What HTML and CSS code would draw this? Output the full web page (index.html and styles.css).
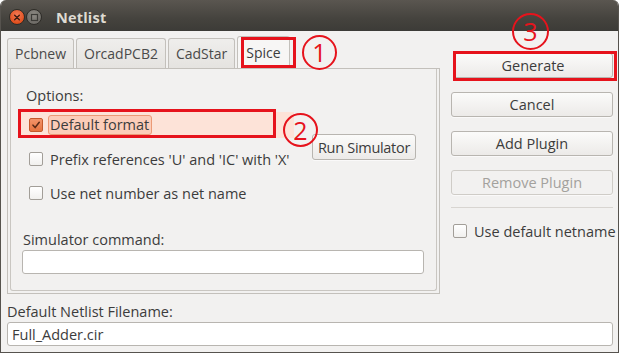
FILE: index.html
```html
<!DOCTYPE html>
<html>
<head>
<meta charset="utf-8">
<link rel="stylesheet" href="styles.css">
</head>
<body>
<div class="window">
  <div class="titlebar">
    <span class="wbtn close"><svg width="15" height="15" viewBox="0 0 15 15"><path d="M5 5 L10 10 M10 5 L5 10" stroke="#3a1a10" stroke-width="1.4" stroke-linecap="round"/></svg></span>
    <span class="wbtn max"><svg width="13" height="13" viewBox="0 0 13 13"><rect x="3.5" y="3.5" width="6" height="6" fill="none" stroke="#3c3b37" stroke-width="1.2"/></svg></span>
    <span class="title">Netlist</span>
  </div>
  <div class="content">
    <div class="top">
      <div class="notebook">
        <div class="tabs">
          <div class="tab">Pcbnew</div>
          <div class="tab">OrcadPCB2</div>
          <div class="tab">CadStar</div>
          <div class="tab active">Spice</div>
        </div>
        <div class="page">
          <div class="frame">
            <div class="label opt">Options:</div>
            <div class="options">
              <div class="checks">
                <div class="check hl"><span class="box checked"><svg width="14" height="14" viewBox="0 0 14 14"><path d="M3.5 7.2 L6 10 L10.8 3.8" fill="none" stroke="#5b2a17" stroke-width="1.8" stroke-linecap="round" stroke-linejoin="round"/></svg></span><span class="focus">Default format</span></div>
                <div class="check"><span class="box"></span><span class="txt">Prefix references 'U' and 'IC' with 'X'</span></div>
                <div class="check"><span class="box"></span><span class="txt">Use net number as net name</span></div>
              </div>
              <div class="btn sim">Run Simulator</div>
            </div>
            <div class="label cmd">Simulator command:</div>
            <div class="input cmdinput"></div>
          </div>
        </div>
      </div>
      <div class="side">
        <div class="btn">Generate</div>
        <div class="btn">Cancel</div>
        <div class="btn">Add Plugin</div>
        <div class="btn disabled">Remove Plugin</div>
        <div class="sep"></div>
        <div class="check side-check"><span class="box"></span><span class="txt">Use default netname</span></div>
      </div>
    </div>
    <div class="label fname">Default Netlist Filename:</div>
    <div class="input">Full_Adder.cir</div>
  </div>

  <div class="mark rect r1"></div>
  <div class="mark circ c1">1</div>
  <div class="mark rect r2"></div>
  <div class="mark circ c2">2</div>
  <div class="mark rect r3"></div>
  <div class="mark circ c3">3</div>
</div>
</body>
</html>
```
FILE: styles.css
```css
* { box-sizing: border-box; }
html, body { margin: 0; padding: 0; background: #ffffff; }
body {
  font-family: "Open Sans", "DejaVu Sans", sans-serif;
  font-size: 14.5px;
  color: #3c3c3c;
}
.window {
  position: relative;
  width: 619px;
  height: 353px;
  background: #f2f1f0;
  border: 1px solid #56534e;
  border-top: none;
  border-radius: 6px 6px 0 0;
  overflow: hidden;
}
.titlebar {
  height: 31px;
  background: linear-gradient(#5a5650, #45433e 60%, #3c3b37);
  display: flex;
  align-items: center;
  padding-left: 8px;
  padding-top: 3px;
}
.wbtn {
  width: 16px;
  height: 16px;
  border-radius: 50%;
  display: flex;
  align-items: center;
  justify-content: center;
}
.close {
  background: radial-gradient(circle at 50% 35%, #f47a55, #e0501f 70%, #b9400f);
  border: 1px solid #2e2c28;
}
.max {
  margin-left: 1px;
  background: radial-gradient(circle at 50% 35%, #8e8b85, #6b6964 80%);
  border: 1px solid #2e2c28;
}
.title {
  margin-left: 14px;
  font-weight: bold;
  font-size: 14.5px;
  color: #dfdbd2;
  letter-spacing: 0.2px;
}
.content {
  padding: 5px 5px 0 6px;
}
.top {
  display: flex;
  align-items: flex-start;
}
.notebook {
  width: 434px;
}
.tabs {
  display: flex;
  align-items: flex-end;
  gap: 2px;
  height: 32px;
  font-size: 14px;
}
.tab {
  height: 30px;
  padding: 0 7px;
  display: flex;
  align-items: center;
  border: 1px solid #c3c0bb;
  border-bottom: none;
  border-radius: 3px 3px 0 0;
  background: linear-gradient(#efeeec, #e5e3e0);
  color: #4a4a4a;
}
.tab.active {
  height: 32px;
  background: #f7f6f5;
  color: #3c3c3c;
  padding: 0 8px;
}
.page {
  height: 226px;
  border: 1px solid #c3c0bb;
  padding: 0 2px 2px 2px;
  background: #f2f1f0;
}
.frame {
  height: 100%;
  border: 1px solid #c9c6c1;
  border-top: none;
  border-radius: 0 0 3px 3px;
  padding: 0 12px 0 7px;
}
.label {
  line-height: 18px;
  white-space: nowrap;
}
.opt {
  padding-top: 18px;
  padding-left: 8px;
}
.options {
  display: flex;
  align-items: flex-start;
  margin-top: 7px;
}
.checks {
  width: 276px;
  display: flex;
  flex-direction: column;
  gap: 8px;
}
.check {
  height: 26px;
  display: flex;
  align-items: center;
  padding-left: 11px;
  white-space: nowrap;
}
.check.hl {
  background: #fde3d8;
}
.box {
  width: 14px;
  height: 14px;
  flex: none;
  border: 1px solid #a29e98;
  border-radius: 2px;
  background: linear-gradient(#ffffff, #f1f0ee);
  margin-right: 7px;
  display: flex;
  align-items: center;
  justify-content: center;
}
.box.checked {
  border-color: #c45a2c;
  background: linear-gradient(#f3946a, #e6733f);
}
.focus {
  border: 1px solid #eb9a76;
  border-radius: 3px;
  background: #fccdb9;
  padding: 0 2px 0 1px;
  margin-left: -2px;
  line-height: 18px;
}
.btn {
  height: 25px;
  border: 1px solid #b8b5b0;
  border-radius: 3px;
  background: linear-gradient(#fbfbfa, #eceae8);
  display: flex;
  align-items: center;
  justify-content: center;
  white-space: nowrap;
  box-shadow: 0 1px 0 rgba(255,255,255,0.6);
}
.btn.disabled {
  color: #a3a19d;
  background: #f2f1f0;
  border-color: #cfccc7;
}
.sim {
  margin-top: 22px;
  margin-left: 18px;
  width: 104px;
  height: 26px;
  letter-spacing: -0.3px;
}
.cmd {
  margin-top: 25px;
  padding-left: 5px;
}
.input {
  height: 24px;
  border: 1px solid #b8b5b0;
  border-radius: 3px;
  background: #ffffff;
  display: flex;
  align-items: center;
  padding-left: 4px;
  white-space: nowrap;
}
.cmdinput {
  margin-top: 1px;
  margin-left: 4px;
  width: 402px;
}
.side {
  width: 162px;
  margin-left: 11px;
  padding-top: 17px;
  display: flex;
  flex-direction: column;
  gap: 14px;
}
.side .btn:first-child {
  margin-left: 2px;
}
.sep {
  height: 1px;
  background: #d8d5d1;
  margin-top: -2px;
}
.side-check {
  padding-left: 2px;
  height: 20px;
  margin-top: -1px;
}
.fname {
  margin-top: 9px;
}
.content > .input {
  margin-top: 1px;
}
.mark {
  position: absolute;
  border: 3px solid #e6131c;
}
.r1 { left: 240px; top: 37px; width: 55px; height: 31px; }
.r2 { left: 17px; top: 109px; width: 258px; height: 29px; }
.r3 { left: 452px; top: 51px; width: 164px; height: 30px; }
.circ {
  border-width: 2px;
  border-radius: 50%;
  display: flex;
  align-items: center;
  justify-content: center;
  color: #e6131c;
  font-family: "Open Sans", "DejaVu Sans", sans-serif;
  font-size: 25px;
  line-height: 1;
}
.c1 { left: 301px; top: 35px; width: 35px; height: 35px; }
.c2 { left: 282px; top: 113px; width: 35px; height: 34px; }
.c3 { left: 511px; top: 13px; width: 37px; height: 37px; }
```
